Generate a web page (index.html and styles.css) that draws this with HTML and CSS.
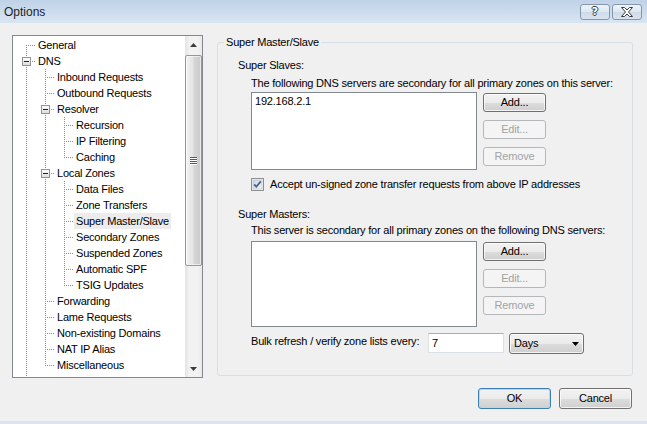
FILE: index.html
```html
<!DOCTYPE html>
<html>
<head>
<meta charset="utf-8">
<title>Options</title>
<link rel="stylesheet" href="styles.css">
</head>
<body>
<div class="titlebar">
  <span class="title">Options</span>
  <div class="caption-btns">
    <span class="cap-btn"><span class="qmark">?</span></span>
    <span class="cap-btn">
      <svg width="12" height="10" viewBox="0 0 12 10"><polygon points="0.5,0.5 3.5,0.5 6,3 8.5,0.5 11.5,0.5 7.5,5 11.5,9.5 8.5,9.5 6,7 3.5,9.5 0.5,9.5 4.5,5" fill="#fff" stroke="#3a3a3a" stroke-width="1" stroke-linejoin="round"/></svg>
    </span>
  </div>
</div>

<div class="main">
  <div class="tree">
    <div class="tree-items">
      <div class="node"><span class="g f"></span><span class="lbl">General</span></div>
      <div class="node"><span class="g xc"><span class="exp"><span class="minus"></span></span></span><span class="lbl">DNS</span></div>
      <div class="node"><span class="g v"></span><span class="g t"></span><span class="lbl">Inbound Requests</span></div>
      <div class="node"><span class="g v"></span><span class="g t"></span><span class="lbl">Outbound Requests</span></div>
      <div class="node"><span class="g v"></span><span class="g xc"><span class="exp"><span class="minus"></span></span></span><span class="lbl">Resolver</span></div>
      <div class="node"><span class="g v"></span><span class="g v"></span><span class="g t"></span><span class="lbl">Recursion</span></div>
      <div class="node"><span class="g v"></span><span class="g v"></span><span class="g t"></span><span class="lbl">IP Filtering</span></div>
      <div class="node"><span class="g v"></span><span class="g v"></span><span class="g l"></span><span class="lbl">Caching</span></div>
      <div class="node"><span class="g v"></span><span class="g xc"><span class="exp"><span class="minus"></span></span></span><span class="lbl">Local Zones</span></div>
      <div class="node"><span class="g v"></span><span class="g v"></span><span class="g t"></span><span class="lbl">Data Files</span></div>
      <div class="node"><span class="g v"></span><span class="g v"></span><span class="g t"></span><span class="lbl">Zone Transfers</span></div>
      <div class="node"><span class="g v"></span><span class="g v"></span><span class="g t"></span><span class="lbl sel">Super Master/Slave</span></div>
      <div class="node"><span class="g v"></span><span class="g v"></span><span class="g t"></span><span class="lbl">Secondary Zones</span></div>
      <div class="node"><span class="g v"></span><span class="g v"></span><span class="g t"></span><span class="lbl">Suspended Zones</span></div>
      <div class="node"><span class="g v"></span><span class="g v"></span><span class="g t"></span><span class="lbl">Automatic SPF</span></div>
      <div class="node"><span class="g v"></span><span class="g v"></span><span class="g l"></span><span class="lbl">TSIG Updates</span></div>
      <div class="node"><span class="g v"></span><span class="g t"></span><span class="lbl">Forwarding</span></div>
      <div class="node"><span class="g v"></span><span class="g t"></span><span class="lbl">Lame Requests</span></div>
      <div class="node"><span class="g v"></span><span class="g t"></span><span class="lbl">Non-existing Domains</span></div>
      <div class="node"><span class="g v"></span><span class="g t"></span><span class="lbl">NAT IP Alias</span></div>
      <div class="node"><span class="g v"></span><span class="g l"></span><span class="lbl">Miscellaneous</span></div>
      <div class="node"><span class="g v"></span></div>
    </div>
    <div class="vscroll">
      <div class="sb-btn"><svg width="7" height="4" viewBox="0 0 7 4"><polygon points="3.5,0 7,4 0,4" fill="#3c3c3c"/></svg></div>
      <div class="thumb">
        <svg width="7" height="8" viewBox="0 0 7 8"><g fill="#5a5a5a"><rect x="0" y="0" width="7" height="1"/><rect x="0" y="2" width="7" height="1"/><rect x="0" y="4" width="7" height="1"/><rect x="0" y="6" width="7" height="1"/></g><g fill="#fff"><rect x="0" y="1" width="7" height="1"/><rect x="0" y="3" width="7" height="1"/><rect x="0" y="5" width="7" height="1"/><rect x="0" y="7" width="7" height="1"/></g></svg>
      </div>
      <div class="sb-space"></div>
      <div class="sb-btn"><svg width="7" height="4" viewBox="0 0 7 4"><polygon points="0,0 7,0 3.5,4" fill="#3c3c3c"/></svg></div>
    </div>
  </div>

  <fieldset class="group">
    <legend class="group-title">Super Master/Slave</legend>
    <div class="group-body">
      <div class="sec first">Super Slaves:</div>
      <div class="desc">The following DNS servers are secondary for all primary zones on this server:</div>
      <div class="list-row">
        <div class="listbox slaves"><div class="item">192.168.2.1</div></div>
        <div class="btn-col">
          <button class="btn">Add...</button>
          <button class="btn" disabled>Edit...</button>
          <button class="btn" disabled>Remove</button>
        </div>
      </div>
      <div class="check-row">
        <svg class="checkbox" width="13" height="13" viewBox="0 0 13 13">
          <defs><linearGradient id="cbg" x1="0" y1="0" x2="1" y2="1"><stop offset="0" stop-color="#cbd5e1"/><stop offset="1" stop-color="#f4f6f9"/></linearGradient></defs>
          <rect x="0.5" y="0.5" width="12" height="12" fill="#f6f6f6" stroke="#8e8f8f"/>
          <rect x="2" y="2" width="9" height="9" fill="url(#cbg)" stroke="#b3bcc6" stroke-width="0.6"/>
          <polyline points="3.2,6.4 5.3,8.8 9.8,3.4" fill="none" stroke="#4a5a8c" stroke-width="1.7"/>
        </svg>
        <span>Accept un-signed zone transfer requests from above IP addresses</span>
      </div>
      <div class="sec second">Super Masters:</div>
      <div class="desc tight">This server is secondary for all primary zones on the following DNS servers:</div>
      <div class="list-row masters-row">
        <div class="listbox masters"></div>
        <div class="btn-col">
          <button class="btn">Add...</button>
          <button class="btn" disabled>Edit...</button>
          <button class="btn" disabled>Remove</button>
        </div>
      </div>
      <div class="bulk-row">
        <span class="bulk-label">Bulk refresh / verify zone lists every:</span>
        <span class="textbox">7</span>
        <span class="combo"><span>Days</span><svg width="7" height="4" viewBox="0 0 7 4"><polygon points="0,0 7,0 3.5,4" fill="#000"/></svg></span>
      </div>
    </div>
  </fieldset>
</div>

<div class="footer">
  <button class="btn big default">OK</button>
  <button class="btn big">Cancel</button>
</div>
</body>
</html>
```
FILE: styles.css
```css
* { box-sizing: border-box; }
html, body { margin: 0; padding: 0; }
body {
  width: 647px;
  height: 424px;
  overflow: hidden;
  background: #f0f0f0;
  font-family: "Liberation Sans", Arial, sans-serif;
  font-size: 11px;
  letter-spacing: -0.2px;
  color: #000;
  display: flex;
  flex-direction: column;
  border-bottom: 3px solid #dbe5f0;
}

/* title bar */
.titlebar {
  height: 23px;
  flex: none;
  display: flex;
  align-items: center;
  justify-content: space-between;
  padding: 0 5px 0 4px;
  background: linear-gradient(#bfd2e7, #d9e5f2);
}
.title { font-size: 12px; line-height: 16px; color: #1e1e1e; letter-spacing: 0; }
.caption-btns { display: flex; gap: 2px; align-self: flex-start; margin-top: 4px; }
.cap-btn {
  width: 30px;
  height: 16px;
  border: 1px solid #8596ad;
  border-radius: 3px;
  background: linear-gradient(#eef3f9, #dde7f1 50%, #cfdbe8 51%, #d9e3ef);
  display: flex;
  align-items: center;
  justify-content: center;
}
.qmark {
  font-family: "DejaVu Sans", sans-serif;
  font-weight: bold;
  font-size: 11px;
  line-height: 12px;
  letter-spacing: 0;
  color: #fff;
  text-shadow: 1px 0 0 #3a3a3a, -1px 0 0 #3a3a3a, 0 1px 0 #3a3a3a, 0 -1px 0 #3a3a3a;
}

/* main area */
.main {
  flex: none;
  display: flex;
  align-items: flex-start;
  gap: 14px;
  padding: 12px 0 0 12px;
}

/* tree */
.tree {
  width: 191px;
  height: 343px;
  flex: none;
  border: 1px solid #828790;
  background: #fff;
  display: flex;
  overflow: hidden;
}
.tree-items { flex: 1; min-width: 0; overflow: hidden; padding: 1px 0 0 4px; }
.node { display: flex; height: 16px; white-space: nowrap; }
.g { width: 19px; height: 16px; flex: none; display: block; }
.v {
  background: repeating-linear-gradient(to bottom, #8e8e8e 0 1px, transparent 1px 2px) 9px 0 / 1px 16px no-repeat;
}
.t {
  background:
    repeating-linear-gradient(to bottom, #8e8e8e 0 1px, transparent 1px 2px) 9px 0 / 1px 16px no-repeat,
    repeating-linear-gradient(to right, #8e8e8e 0 1px, transparent 1px 2px) 11px 8px / 8px 1px no-repeat;
}
.l {
  background:
    repeating-linear-gradient(to bottom, #8e8e8e 0 1px, transparent 1px 2px) 9px 0 / 1px 9px no-repeat,
    repeating-linear-gradient(to right, #8e8e8e 0 1px, transparent 1px 2px) 11px 8px / 8px 1px no-repeat;
}
.f {
  background:
    repeating-linear-gradient(to bottom, #8e8e8e 0 1px, transparent 1px 2px) 9px 8px / 1px 8px no-repeat,
    repeating-linear-gradient(to right, #8e8e8e 0 1px, transparent 1px 2px) 11px 8px / 8px 1px no-repeat;
}
.xc {
  padding: 4px 0 0 5px;
  background:
    repeating-linear-gradient(to bottom, #8e8e8e 0 1px, transparent 1px 2px) 9px 0 / 1px 16px no-repeat,
    repeating-linear-gradient(to right, #8e8e8e 0 1px, transparent 1px 2px) 15px 8px / 4px 1px no-repeat;
}
.exp {
  width: 9px;
  height: 9px;
  border: 1px solid #939393;
  background: linear-gradient(#ffffff, #dcdcdc);
  display: flex;
  align-items: center;
  justify-content: center;
}
.minus { width: 5px; height: 1px; background: #1d1d1d; }
.lbl { padding: 0 2px; line-height: 16px; height: 16px; }
.lbl.sel { background: #ececec; }

/* scrollbar */
.vscroll {
  width: 17px;
  flex: none;
  display: flex;
  flex-direction: column;
  background: linear-gradient(90deg, #e3e3e3, #f2f2f2 25%, #f2f2f2 75%, #e9e9e9);
}
.sb-btn { height: 17px; flex: none; display: flex; align-items: center; justify-content: center; }
.thumb {
  flex: none;
  height: 211px;
  margin-top: 2px;
  border: 1px solid #979797;
  border-radius: 2px;
  background: linear-gradient(90deg, #f3f3f3, #e4e4e4 45%, #d5d5d5 55%, #c9c9c9);
  box-shadow: inset 0 0 0 1px rgba(255,255,255,0.6);
  display: flex;
  align-items: center;
  justify-content: center;
}
.sb-space { flex: 1; }

/* group box */
.group {
  margin: 0;
  padding: 0;
  min-width: 0;
  width: 416px;
  height: 341px;
  border: 1px solid #d5dfe5;
  border-radius: 3px;
}
.group-title { padding: 0 2px; margin-left: 6px; line-height: 14px; }
.group-body { padding-left: 20px; }
.sec { line-height: 13px; }
.sec.first { margin-top: 10px; }
.sec.second { margin-top: 17px; }
.desc { line-height: 13px; margin: 5px 0 0 13px; white-space: nowrap; }
.desc.tight { margin-top: 3px; }
.list-row { display: flex; gap: 6px; margin: 2px 0 0 13px; }
.list-row.masters-row { margin-top: 4px; }
.listbox {
  width: 226px;
  border: 1px solid #828790;
  background: #fff;
  padding: 2px 3px;
  line-height: 13px;
}
.listbox.slaves { height: 78px; }
.listbox.masters { height: 86px; }
.btn-col { display: flex; flex-direction: column; gap: 8px; padding-top: 1px; }

.btn {
  font: inherit;
  letter-spacing: inherit;
  color: #000;
  width: 63px;
  height: 19px;
  padding: 0;
  margin: 0;
  border: 1px solid #707070;
  border-radius: 3px;
  background: linear-gradient(#f2f2f2, #ebebeb 50%, #dddddd 51%, #cfcfcf);
  box-shadow: inset 0 0 0 1px rgba(255,255,255,0.75);
  display: flex;
  align-items: center;
  justify-content: center;
  line-height: 13px;
}
.btn:disabled {
  color: #a3a3a3;
  border-color: #b5b8bb;
  background: #f4f4f4;
  box-shadow: none;
}
.btn.big { width: 73px; height: 21px; }
.btn.default {
  border-color: #3c7fb1;
  box-shadow: inset 0 0 0 1px #a9dcf6;
}

.check-row { display: flex; align-items: center; gap: 6px; margin: 8px 0 0 13px; line-height: 13px; }
.checkbox { display: block; flex: none; }

.bulk-row { display: flex; align-items: flex-start; margin: 6px 0 0 13px; }
.bulk-label { width: 177px; flex: none; margin-top: 2px; line-height: 13px; white-space: nowrap; }
.textbox {
  width: 76px;
  height: 20px;
  flex: none;
  background: #fff;
  border: 1px solid #dbdfe6;
  border-top-color: #abadb3;
  padding: 2px 3px;
  line-height: 14px;
}
.combo {
  width: 75px;
  height: 21px;
  flex: none;
  margin-left: 5px;
  border: 1px solid #707070;
  border-radius: 3px;
  background: linear-gradient(#f2f2f2, #ebebeb 50%, #dddddd 51%, #cfcfcf);
  box-shadow: inset 0 0 0 1px rgba(255,255,255,0.75);
  display: flex;
  align-items: center;
  justify-content: space-between;
  padding: 0 4px 0 4px;
  line-height: 13px;
}
.combo svg { display: block; }

/* footer */
.footer {
  flex: 1;
  display: flex;
  justify-content: flex-end;
  align-items: flex-start;
  gap: 8px;
  padding: 10px 15px 0 0;
}
```
